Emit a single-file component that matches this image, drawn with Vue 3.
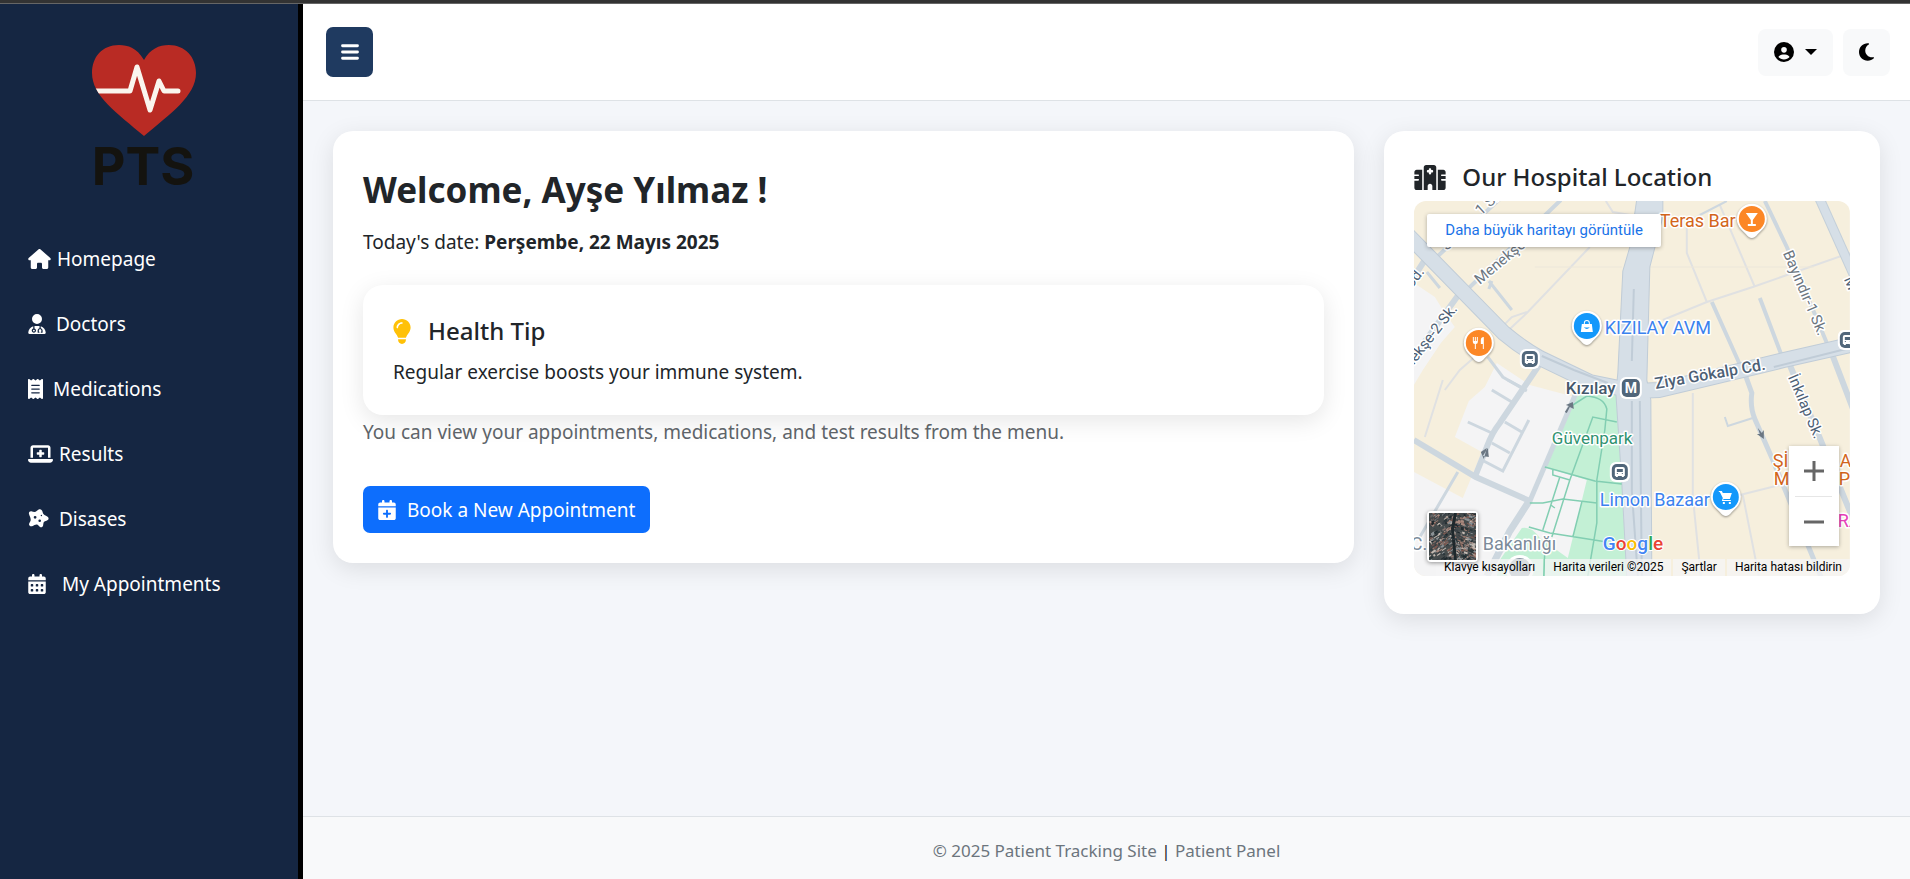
<script setup>
const calendarTop = 'M96 32V64H48C21.5 64 0 85.5 0 112v48H448V112c0-26.5-21.5-48-48-48H352V32c0-17.7-14.3-32-32-32s-32 14.3-32 32V64H160V32c0-17.7-14.3-32-32-32S96 14.3 96 32z'
const dayCells = [272, 400]
  .flatMap((y) => [64, 192, 320].map((x) => `M${x} ${y}v32c0 8.800 7.200 16 16 16h32c8.800 0 16-7.200 16-16v-32c0-8.800-7.200-16-16-16h-32c-8.800 0-16 7.200-16 16z`))
  .join('')

const navItems = [
  {
    label: 'Homepage',
    gap: 'gap-narrow',
    width: 23,
    box: '0 0 576 512',
    d: 'M575.8 255.5c0 18-15 32.1-32 32.1h-32l.7 160.2c0 2.7-.2 5.4-.5 8.1V472c0 22.1-17.9 40-40 40H456c-1.1 0-2.2 0-3.3-.1c-1.4 .1-2.8 .1-4.2 .1H416 392c-22.1 0-40-17.9-40-40V448 384c0-17.7-14.3-32-32-32H256c-17.7 0-32 14.3-32 32v64 24c0 22.1-17.9 40-40 40H160 128.1c-1.5 0-3-.1-4.5-.2c-1.2 .1-2.4 .2-3.6 .2H104c-22.1 0-40-17.9-40-40V360c0-.9 0-1.9 .1-2.8V287.6H32c-18 0-32-14-32-32.1c0-9 3-17 10-24L266.4 8c7-7 15-8 22-8s15 2 21 7L564.8 231.5c8 7 12 15 11 24z'
  },
  {
    label: 'Doctors',
    gap: 'gap-medium',
    width: 18,
    box: '0 0 448 512',
    d: 'M224 256a128 128 0 1 0 0-256 128 128 0 1 0 0 256zm-96 55.2C54 332.9 0 401.3 0 482.3C0 498.7 13.3 512 29.7 512H418.3c16.4 0 29.7-13.3 29.7-29.7c0-81-54-149.4-128-171.1V362c27.6 7.1 48 32.2 48 62v40c0 8.8-7.2 16-16 16H336c-8.8 0-16-7.2-16-16s7.2-16 16-16V424c0-17.7-14.3-32-32-32s-32 14.3-32 32v24c8.8 0 16 7.2 16 16s-7.2 16-16 16H256c-8.8 0-16-7.2-16-16V424c0-29.8 20.4-54.9 48-62V304.9c-6-.6-12.1-.9-18.3-.9H178.3c-6.2 0-12.3 .3-18.3 .9v65.4c23.1 6.9 40 28.3 40 53.7c0 30.9-25.1 56-56 56s-56-25.1-56-56c0-25.4 16.9-46.8 40-53.7V311.2zM144 448a24 24 0 1 0 0-48 24 24 0 1 0 0 48z'
  },
  {
    label: 'Medications',
    gap: 'gap-medium',
    width: 15,
    box: '0 0 384 512',
    d: 'M14 2.2C22.5-1.7 32.5-.3 39.6 5.8L80 40.4 120.4 5.8c9-7.7 22.3-7.7 31.2 0L192 40.4 232.4 5.8c9-7.7 22.3-7.7 31.2 0L304 40.4 344.4 5.8c7.1-6.1 17.1-7.5 25.6-3.6s14 12.4 14 21.8V488c0 9.4-5.5 17.9-14 21.8s-18.5 2.5-25.6-3.6L304 471.6l-40.4 34.6c-9 7.7-22.3 7.7-31.2 0L192 471.6l-40.4 34.6c-9 7.7-22.3 7.7-31.2 0L80 471.6 39.6 506.2c-7.1 6.1-17.1 7.5-25.6 3.6S0 497.4 0 488V24C0 14.6 5.5 6.1 14 2.2zM96 144c-8.8 0-16 7.2-16 16s7.2 16 16 16H288c8.8 0 16-7.2 16-16s-7.2-16-16-16H96zM80 352c0 8.8 7.2 16 16 16H288c8.8 0 16-7.2 16-16s-7.2-16-16-16H96c-8.800 0-16 7.200-16 16zM96 240c-8.8 0-16 7.2-16 16s7.2 16 16 16H288c8.8 0 16-7.2 16-16s-7.2-16-16-16H96z'
  },
  {
    label: 'Results',
    gap: 'gap-narrow',
    width: 25,
    box: '0 0 640 512',
    d: 'M64 96c0-35.3 28.7-64 64-64H512c35.3 0 64 28.7 64 64V352H512V96H128V352H64V96zM0 403.2C0 392.6 8.6 384 19.2 384H620.8c10.6 0 19.2 8.6 19.2 19.2c0 42.4-34.4 76.8-76.8 76.8H76.8C34.4 480 0 445.6 0 403.2zM288 160c0-8.8 7.2-16 16-16h32c8.8 0 16 7.2 16 16v48h48c8.8 0 16 7.2 16 16v32c0 8.8-7.2 16-16 16H352v48c0 8.8-7.2 16-16 16H304c-8.8 0-16-7.2-16-16V272H240c-8.8 0-16-7.2-16-16V224c0-8.8 7.2-16 16-16h48V160z'
  },
  {
    label: 'Disases',
    gap: 'gap-medium',
    width: 21,
    box: '0 0 21 20',
    d: 'M1 5C.4 3 2.300 1.700 4 2.500C5.800 3.300 7.500 3.200 9 1.800C10.500 0 12.600-.4 14 1.500C15 3 14.500 5 16.500 6C18.500 7 20.500 7.500 20.600 9.500C20.500 11.500 18 11.600 16.500 12.500C15 13.500 15.600 15 15 17C14 19 12 18.600 11 17C10 15.500 8.500 15 6.500 16C4.500 17.300 2 18 1.200 16C.5 14 2.500 13 2.700 11.200C2.800 8.800 1.500 7 1 5zM5.700 8.300a1.400 1.400 0 1 0 2.800 0a1.400 1.400 0 1 0-2.800 0zM10.400 11.800a1.300 1.300 0 1 0 2.600 0a1.300 1.300 0 1 0-2.600 0zM12.700 6.500a.7.700 0 1 0 1.400 0a.7.700 0 1 0-1.400 0z'
  },
  {
    label: 'My Appointments',
    gap: 'gap-wide',
    width: 18,
    box: '0 0 448 512',
    d: `${calendarTop}M0 192H448V464c0 26.500-21.500 48-48 48H48c-26.500 0-48-21.500-48-48V192z${dayCells}`
  }
]

// Rooftops of the satellite preview, from a small seeded generator.
let seed = 7
const rand = () => {
  seed = (seed * 16807) % 2147483647
  return seed / 2147483647
}
const roofColors = ['#96766c', '#a98b80', '#66686a', '#8b9296', '#3a4146', '#7a5850', '#c4bab2', '#1f292e', '#2b373a']
const roofs = Array.from({ length: 480 }, () => {
  const x = Math.round(rand() * 48)
  const y = Math.round(rand() * 48)
  return {
    x,
    y,
    w: 1 + Math.round(rand() * 4),
    h: 1 + Math.round(rand()),
    turn: `rotate(${x < 25 ? -35 : 20} ${x} ${y})`,
    fill: roofColors[Math.floor(rand() * roofColors.length)]
  }
})

const roads = [
  { w: 6, d: 'M0 239L62 276L116 300' },
  { w: 5, d: 'M116 300L163 190' },
  { w: 7, d: 'M116 299L96 330L73 375' },
  { w: 6, d: 'M61 276L73 246Q78 232 86 222L128 160' },
  { w: 3, d: 'M78 189L98 201M54 221L78 232M91 221L108 231M115 219L89 270L68 259M78 242L96 252M94 179L109 187' },
  { w: 3, d: 'M44 271L6 336M74 156L89 176L113 190' },
  { w: 6, d: 'M46 92L0 156M11 59L0 76' },
  { w: 4, d: 'M54 88L147-1M23 56L86-2' },
  { w: 3, d: 'M13 71L26 87M75 80L98 109M75 88L78 80' },
  { w: 4, d: 'M351 0L373 46L413 142M298 101L328 168M346 97L368 155' },
  { w: 6, d: 'M417 150L440 210M376 164L440 320' },
  { w: 5, d: 'M330 170L338 192Q336 206 341 218L359 259L408 378' },
  { w: 2, d: 'M311 216L314 225L339 217M286 14L313 0' }
]

const lanes = 'M29 179L11 236M176 46L113 112L96 128M113 111L98 116L83 131M62 155L46 169L31 189M306 4L341 86M273 26V52L293 101M249 119L293 101L339 86L436 52M286 14L273 22M279 192V296L287 375M329 294L345 375M326 294L366 284M192 0L199 11L228 16M0 66'

const parkPaths = 'M159 204L173 195Q190 196 193 208L191 229L183 279M156 279L179 216L203 221M131 266L181 280L208 283M139 269V274L156 279L138 336M146 276L129 329M116 302H129L149 298L183 302M183 279V322L174 375M168 301L159 336M115 326L136 332L193 341M131 349L130 375M137 304L141 307'

const pins = [
  { x: 338, y: 18, color: '#fc8726', d: 'M-6-6H6L1 1V5H4V7H-4V5H-1V1Z' },
  { x: 65, y: 142, color: '#fc8726', d: 'M-6-6h1v4h1v-4h1v4h1v-4h1v5q0 2-2 2v5h-1v-5q-2 0-2-2zM2-3q0-3 3-3v12h-1v-5h-2z' },
  { x: 173, y: 125, color: '#1398fb', d: 'M-5-2h2v-1a3 3 0 0 1 6 0v1h2l1 8h-12zM-2-2h4v-1a2 2 0 0 0-4 0zM-3 1q3 4 6 0q-3 1-6 0' },
  { x: 312, y: 296, color: '#1398fb', d: 'M-7-6h3l1 2h9l-2 6h-6l-1 1h8v1h-9l1-3-3-6h-1zM-3 5h2v2h-2zM3 5h2v2h-2z' }
]
const stops = [
  { x: 116, y: 158 },
  { x: 206, y: 271 },
  { x: 434, y: 139 }
]
</script>

<template>
  <div class="page">
    <div class="window-edge"></div>
    <div class="shell">
      <aside class="sidebar">
        <svg class="logo" viewBox="0 0 110 150" role="img" aria-label="PTS">
          <defs>
            <clipPath id="heart-clip">
              <path d="M54 16C47 4 38 1 29 1C12 1 2 13 2 29C2 52 27 69 54 92C80 70 106 52 106 29C106 13 95 1 79 1C69 1 60 5 54 16Z" />
            </clipPath>
          </defs>
          <path fill="#b92b24" d="M54 16C47 4 38 1 29 1C12 1 2 13 2 29C2 52 27 69 54 92C80 70 106 52 106 29C106 13 95 1 79 1C69 1 60 5 54 16Z" />
          <path clip-path="url(#heart-clip)" class="pulse" d="M0 47H40L47 23L60 66L69 37L74 47H88" />
          <text x="53" y="141" text-anchor="middle" class="logo-text">PTS</text>
        </svg>
        <nav class="nav" aria-label="Main">
          <a v-for="item in navItems" :key="item.label" href="#" :class="['nav-link', item.gap]">
            <svg :width="item.width" height="20" :viewBox="item.box" fill="currentColor" fill-rule="evenodd" aria-hidden="true"><path :d="item.d" /></svg>
            <span>{{ item.label }}</span>
          </a>
        </nav>
      </aside>

      <div class="column">
        <header class="topbar">
          <button class="menu-button" type="button" aria-label="Toggle menu">
            <svg width="18" height="20" viewBox="0 0 448 512" fill="none" stroke="currentColor" stroke-width="72" stroke-linecap="round" aria-hidden="true"><path d="M32 96H416M32 256H416M32 416H416" /></svg>
          </button>
          <div class="tools">
            <button class="tool account" type="button" aria-label="Account">
              <svg width="20" height="20" viewBox="0 0 512 512" aria-hidden="true"><path d="M399 384.200C376.900 345.800 335.400 320 288 320H224c-47.400 0-88.900 25.800-111 64.200c35.200 39.200 86.200 63.800 143 63.800s107.800-24.700 143-63.800zM0 256a256 256 0 1 1 512 0A256 256 0 1 1 0 256zm256 16a72 72 0 1 0 0-144 72 72 0 1 0 0 144z" /></svg>
              <svg width="12" height="6" viewBox="0 0 12 6" aria-hidden="true"><path d="M0 0H12L6 6Z" /></svg>
            </button>
            <button class="tool" type="button" aria-label="Dark mode">
              <svg width="15" height="20" viewBox="0 0 384 512" aria-hidden="true"><path d="M223.500 32C100 32 0 132.300 0 256S100 480 223.500 480c60.600 0 115.500-24.200 155.800-63.400c5-4.900 6.300-12.500 3.100-18.700s-10.100-9.700-17-8.500c-9.800 1.700-19.800 2.600-30.100 2.600c-96.900 0-175.500-78.800-175.500-176c0-65.800 36-123.100 89.300-153.300c6.100-3.500 9.200-10.500 7.700-17.300s-7.300-11.900-14.300-12.500c-6.300-.5-12.600-.8-19-.8z" /></svg>
            </button>
          </div>
        </header>

        <main class="content">
          <section class="card welcome">
            <h1>Welcome, Ayşe Yılmaz !</h1>
            <p class="date">Today's date: <strong>Perşembe, 22 Mayıs 2025</strong></p>
            <div class="card tip">
              <h2>
                <svg width="18" height="25" viewBox="12 0 360 512" fill="#ffc107" aria-hidden="true"><path d="M272 384c9.600-31.900 29.500-59.100 49.200-86.200l0 0c5.200-7.100 10.400-14.200 15.400-21.400c19.800-28.500 31.400-63 31.400-100.300C368 78.800 289.200 0 192 0S16 78.800 16 176c0 37.300 11.600 71.900 31.400 100.300c5 7.200 10.200 14.300 15.400 21.400l0 0c19.800 27.100 39.700 54.400 49.200 86.200H272zM192 512c44.200 0 80-35.800 80-80V416H112v16c0 44.200 35.800 80 80 80zM112 176c0 8.800-7.200 16-16 16s-16-7.200-16-16c0-61.900 50.100-112 112-112c8.800 0 16 7.200 16 16s-7.200 16-16 16c-44.200 0-80 35.800-80 80z" /></svg>
                Health Tip
              </h2>
              <p>Regular exercise boosts your immune system.</p>
            </div>
            <p class="hint">You can view your appointments, medications, and test results from the menu.</p>
            <button class="book" type="button">
              <svg width="18" height="20" viewBox="0 0 448 512" fill="currentColor" aria-hidden="true"><path :d="calendarTop + 'M448 192H0V464c0 26.500 21.500 48 48 48H400c26.500 0 48-21.500 48-48V192zM224 248c13.300 0 24 10.700 24 24v56h56c13.300 0 24 10.700 24 24s-10.700 24-24 24H248v56c0 13.300-10.700 24-24 24s-24-10.700-24-24V376H144c-13.300 0-24-10.700-24-24s10.700-24 24-24h56V272c0-13.300 10.700-24 24-24z'" /></svg>
              Book a New Appointment
            </button>
          </section>

          <section class="card location">
            <h2>
              <svg width="32" height="25" viewBox="0 0 640 512" fill="currentColor" aria-hidden="true"><path fill-rule="evenodd" d="M192 48c0-26.500 21.500-48 48-48H400c26.500 0 48 21.500 48 48V512H368V432c0-26.500-21.500-48-48-48s-48 21.500-48 48v80H192V48zM48 96H160V512H48c-26.500 0-48-21.500-48-48V320H80c8.800 0 16-7.200 16-16s-7.200-16-16-16H0V224H80c8.800 0 16-7.200 16-16s-7.200-16-16-16H0V144c0-26.500 21.500-48 48-48zm544 0c26.500 0 48 21.500 48 48v48H560c-8.800 0-16 7.200-16 16s7.200 16 16 16h80v64H560c-8.800 0-16 7.200-16 16s7.200 16 16 16h80V464c0 26.500-21.500 48-48 48H480V96H592zM312 64c-8.800 0-16 7.200-16 16v24H272c-8.800 0-16 7.200-16 16v16c0 8.800 7.200 16 16 16h24v24c0 8.800 7.200 16 16 16h16c8.800 0 16-7.200 16-16V152h24c8.800 0 16-7.200 16-16V120c0-8.800-7.200-16-16-16H344V80c0-8.800-7.200-16-16-16H312z" /></svg>
              Our Hospital Location
            </h2>
            <div class="map">
              <svg class="map-canvas" viewBox="0 0 436 375" preserveAspectRatio="xMidYMid slice">
                <rect width="436" height="375" fill="#f6efdd" />
                <path fill="#f4f4f5" d="M83 162L116 184L161 196L213 375H0V271L49 297L68 251L41 236L55 200L71 186ZM0 82L21 96L31 112L41 126L27 142L9 169L0 184Z" />
                <path fill="#c3f0d5" d="M161 197L172 190L203 193L208 282L213 375H83L86 359L108 327Q118 325 126 337L154 357L173 279L131 266L150 225Z" />
                <path :d="lanes" fill="none" stroke="#e0e1e2" stroke-width="2" />
                <path v-for="road in roads" :key="road.d" :d="road.d" :stroke-width="road.w" fill="none" stroke="#cdd7df" />
                <path fill="none" stroke="#ece7da" d="M121 66H208M236 66H400" />
                <path fill="none" stroke="#c3cfd9" stroke-width="10" d="M405-4L440 74" />
                <path fill="none" stroke="#d6dfe7" stroke-width="8" d="M405-4L440 74" />
                <path class="casing" d="M-8 32L90 132Q108 147 126 157L176 181L220 190L245 189L300 176L370 159L445 142" />
                <path fill="#d6dfe7" stroke="#c0ccd7" d="M223-2L216 46L209 70L204 172L202 192L208 282L213 377H238L237 199L233 179L236 66L249 16V-2Z" />
                <path class="avenue" d="M-8 32L90 132Q108 147 126 157L176 181L220 190L245 189L300 176L370 159L445 142" />
                <path fill="none" stroke="#c0ccd7" stroke-width="2" d="M220 88L218 160M218 200V290L224 375M226 200L228 375M128 155L160 169L194 182M360 166L436 147" />
                <path :d="parkPaths" fill="none" stroke="#82ceb2" stroke-width="1.500" />
                <g fill="#6b7783">
                  <path d="M73 247L70 258L67 251ZM69 255L75 256L74 247Z" />
                  <path d="M159 201L160 208L156 206L153 212L151 211L155 205L152 204Z" />
                  <path d="M344 227L348 232L350 229L350 238L343 233L346 233Z" />
                </g>
                <circle cx="106" cy="368" r="14" fill="#fff" />
                <circle cx="106" cy="368" r="11" fill="#8592a0" />

                <g class="street">
                  <text transform="translate(67 15) rotate(-42)">1 Sk.</text>
                  <text transform="translate(33 50) rotate(-42)">Sk.</text>
                  <text transform="translate(66 84) rotate(-40)">Menekşe</text>
                  <text class="dark" text-anchor="end" transform="translate(11 71) rotate(-52)">Cd.</text>
                  <text class="dark" text-anchor="end" transform="translate(44 108) rotate(-52)">Menekşe-2 Sk.</text>
                  <text transform="translate(369 52) rotate(67)">Bayındır-1 Sk.</text>
                  <text class="dark" transform="translate(374 176) rotate(67)">İnkılap Sk.</text>
                  <text class="dark" transform="translate(430 78) rotate(67)">M</text>
                  <text class="dark bold" transform="translate(242 188) rotate(-10)">Ziya Gökalp Cd.</text>
                </g>
                <g class="place">
                  <text class="orange" x="246" y="26">Teras Bar</text>
                  <text class="blue" x="191" y="133">KIZILAY AVM</text>
                  <text class="blue" x="186" y="305">Limon Bazaar</text>
                  <text class="green" x="138" y="243">Güvenpark</text>
                  <text class="slate" x="152" y="193">Kızılay</text>
                  <text class="grey" x="-3" y="349">C.</text>
                  <text class="grey" x="69" y="349">Bakanlığı</text>
                  <text class="orange" x="359" y="266">Şİ</text>
                  <text class="orange" x="360" y="284">M</text>
                  <text class="orange" x="426" y="266">A</text>
                  <text class="orange" x="425" y="284">P</text>
                  <text class="pink" x="424" y="326">RA</text>
                </g>
                <g v-for="stop in stops" :key="stop.x" :transform="`translate(${stop.x} ${stop.y})`">
                  <rect x="-10" y="-10" width="20" height="20" rx="6" fill="#fff" />
                  <rect x="-8" y="-8" width="16" height="16" rx="5" fill="#50667a" />
                  <path fill="#fff" fill-rule="evenodd" d="M-5-3q0-2 2-2h6q2 0 2 2v7h-1v1h-2v-1h-4v1h-2v-1h-1zM-3-3v3h6v-3zM-3 1v1h1v-1zM2 1v1h1v-1z" />
                </g>
                <g transform="translate(217 187)">
                  <rect x="-11" y="-11" width="22" height="22" rx="6" fill="#fff" />
                  <rect x="-9" y="-9" width="18" height="18" rx="5" fill="#50667a" />
                  <text class="metro" y="5" text-anchor="middle">M</text>
                </g>
                <g v-for="pin in pins" :key="pin.x" :transform="`translate(${pin.x} ${pin.y})`">
                  <path class="pin" d="M0 19Q-3 19 -6 15L-11 10A15 15 0 1 1 11 10L6 15Q3 19 0 19Z" />
                  <circle r="13" :fill="pin.color" />
                  <path fill="#fff" fill-rule="evenodd" :d="pin.d" />
                </g>
                <text class="google" x="189" y="349"><tspan fill="#4285f4">G</tspan><tspan fill="#ea4335">o</tspan><tspan fill="#fbbc04">o</tspan><tspan fill="#4285f4">g</tspan><tspan fill="#34a853">l</tspan><tspan fill="#ea4335">e</tspan></text>
              </svg>
              <a class="map-larger" href="#">Daha büyük haritayı görüntüle</a>
              <div class="zoom">
                <button type="button" aria-label="Zoom in"><svg width="20" height="20" viewBox="0 0 20 20" aria-hidden="true"><path d="M0 10H20M10 0V20" /></svg></button>
                <button type="button" aria-label="Zoom out"><svg width="20" height="20" viewBox="0 0 20 20" aria-hidden="true"><path d="M0 10H20" /></svg></button>
              </div>
              <div class="credits">
                <button type="button">Klavye kısayolları</button>
                <span>Harita verileri ©2025</span>
                <a href="#">Şartlar</a>
                <a href="#">Harita hatası bildirin</a>
              </div>
              <button class="satellite" type="button" aria-label="Satellite view">
                <svg viewBox="0 0 48 48" aria-hidden="true">
                  <rect width="48" height="48" fill="#454b4c" />
                  <rect v-for="(roof, i) in roofs" :key="i" :x="roof.x" :y="roof.y" :width="roof.w" :height="roof.h" :transform="roof.turn" :fill="roof.fill" />
                  <path fill="none" stroke="#1e282c" stroke-width="3" d="M27 0L24 16L27 48" />
                  <path fill="none" stroke="#39454a" d="M0 12L14 22L25 27L48 18M0 40L14 22" />
                </svg>
              </button>
            </div>
          </section>
        </main>

        <footer class="footer">© 2025 Patient Tracking Site <span>|</span> Patient Panel</footer>
      </div>
    </div>
  </div>
</template>

<style>
body {
  margin: 0;
  background: #f4f6fa;
}
</style>

<style scoped>
.page {
  min-height: 100vh;
  display: flex;
  flex-direction: column;
  font-family: "Noto Sans", "Open Sans", sans-serif;
  font-size: 19px;
  line-height: 30px;
  color: #212529;
}
.page * {
  box-sizing: border-box;
}
button {
  font: inherit;
  color: inherit;
  border: 0;
  padding: 0;
  margin: 0;
  cursor: pointer;
}
a {
  color: inherit;
  text-decoration: none;
}
h1,
h2,
p {
  margin: 0;
}
svg {
  display: block;
  flex-shrink: 0;
}
.window-edge {
  height: 4px;
  background: #333;
  border-bottom: 1px solid #666;
  box-sizing: border-box;
}
.shell {
  flex: 1;
  display: flex;
}
.sidebar {
  width: 303px;
  flex-shrink: 0;
  background: #152642;
  border-right: 5px solid #000;
  padding: 40px 10px 20px;
  color: #fff;
}
.logo {
  width: 110px;
  height: 150px;
  margin: 0 auto 40px 80px;
  overflow: visible;
}
.logo-text {
  font: 700 52px Inter, "Liberation Sans", sans-serif;
  fill: #14130f;
}
.pulse {
  fill: none;
  stroke: #faf5ee;
  stroke-width: 5;
  stroke-linecap: round;
  stroke-linejoin: round;
}
.nav {
  display: flex;
  flex-direction: column;
  gap: 15px;
}
.nav-link {
  display: flex;
  align-items: center;
  height: 50px;
  padding: 0 18px;
}
.gap-narrow {
  gap: 6px;
}
.gap-medium {
  gap: 10px;
}
.gap-wide {
  gap: 16px;
}
.column {
  flex: 1;
  min-width: 0;
  display: flex;
  flex-direction: column;
  background: #f4f6fa;
}
.topbar {
  display: flex;
  align-items: center;
  justify-content: space-between;
  height: 97px;
  padding: 0 20px 0 23px;
  background: #fff;
  border-bottom: 1px solid #dee2e6;
}
.menu-button {
  width: 47px;
  height: 50px;
  display: grid;
  place-items: center;
  border-radius: 7px;
  background: #1f3a60;
  color: #fff;
}
.tools {
  display: flex;
  gap: 10px;
}
.tool {
  height: 47px;
  padding: 0 16px;
  display: flex;
  align-items: center;
  gap: 11px;
  border-radius: 8px;
  background: #f8f9fa;
  color: #000;
}
.content {
  flex: 1;
  display: grid;
  grid-template-columns: repeat(12, minmax(0, 1fr));
  gap: 30px;
  align-items: start;
  padding: 30px;
}
.card {
  padding: 30px;
  border-radius: 20px;
  background: #fff;
  box-shadow: 0 6px 24px rgba(0, 0, 0, 0.1);
}
.welcome {
  grid-column: span 8;
}
.location {
  grid-column: span 4;
  padding-bottom: 38px;
}
h1 {
  font-size: 35px;
  font-weight: 700;
  line-height: 58px;
  margin-bottom: 8px;
}
h2 {
  display: flex;
  align-items: center;
  gap: 16px;
  font-size: 24px;
  font-weight: 500;
  line-height: 32px;
}
.tip {
  margin: 28px 0 2px;
  padding-bottom: 28px;
}
.tip h2 {
  gap: 17px;
  margin-bottom: 10px;
}
.hint {
  color: #5e6469;
}
.book {
  display: flex;
  align-items: center;
  gap: 11px;
  height: 47px;
  margin-top: 39px;
  padding: 0 15px;
  border-radius: 7px;
  background: #0d6efd;
  color: #fff;
}
.map {
  position: relative;
  height: 375px;
  margin-top: 8px;
  border-radius: 12px;
  overflow: hidden;
  font-family: Roboto, sans-serif;
}
.map-canvas {
  width: 100%;
  height: 100%;
}
.map-canvas text {
  font-family: Roboto, sans-serif;
}
.casing {
  fill: none;
  stroke: #c0ccd7;
  stroke-width: 16;
}
.avenue {
  fill: none;
  stroke: #d6dfe7;
  stroke-width: 14;
}
.street text,
.place text {
  font-size: 18px;
  paint-order: stroke;
  stroke: #fff;
  stroke-width: 3px;
  stroke-linejoin: round;
}
.street text {
  font-size: 15px;
  fill: #6c7680;
}
.street .dark {
  fill: #4d6075;
}
.street .bold {
  font-size: 16px;
  font-weight: 500;
}
.place .orange {
  fill: #d3651a;
}
.place .blue {
  fill: #3b82ee;
}
.place .green {
  font-size: 17px;
  fill: #2f9270;
}
.place .slate {
  font-size: 17px;
  fill: #45586b;
  font-weight: 500;
}
.place .grey {
  fill: #7c8b9a;
}
.place .pink {
  fill: #e640b8;
}
.metro {
  font-size: 14px;
  font-weight: 700;
  fill: #fff;
}
.pin {
  fill: #fff;
  filter: drop-shadow(0 1px 1px rgba(0, 0, 0, 0.4));
}
.google {
  font-size: 19px;
  font-weight: 500;
  paint-order: stroke;
  stroke: #fff;
  stroke-width: 2px;
}
.map-larger {
  position: absolute;
  top: 13px;
  left: 13px;
  padding: 0 18px;
  border-radius: 2px;
  background: #fff;
  box-shadow: 0 1px 4px rgba(0, 0, 0, 0.3);
  color: #1a73e8;
  font-size: 15px;
  line-height: 33px;
}
.zoom {
  position: absolute;
  right: 11px;
  bottom: 30px;
  width: 50px;
  background: #fff;
  box-shadow: 0 1px 4px rgba(0, 0, 0, 0.3);
}
.zoom button {
  width: 100%;
  height: 50px;
  display: grid;
  place-items: center;
  background: none;
}
.zoom button + button::before {
  content: "";
  width: 37px;
  height: 1px;
  background: #e6e6e6;
}
.zoom button + button {
  grid-template-rows: 1px 1fr;
}
.zoom svg {
  fill: none;
  stroke: #666;
  stroke-width: 3;
}
.credits {
  position: absolute;
  right: 0;
  bottom: 0;
  display: flex;
  gap: 2px;
  font-size: 12px;
  line-height: 17px;
  color: #000;
}
.credits > * {
  padding: 0 8px;
  background: rgba(245, 245, 245, 0.75);
  white-space: nowrap;
}
.satellite {
  position: absolute;
  left: 13px;
  bottom: 14px;
  width: 51px;
  height: 51px;
  padding: 2px;
  border-radius: 4px;
  background: #fff;
  box-shadow: 0 1px 4px rgba(0, 0, 0, 0.4);
}
.satellite svg {
  width: 100%;
  height: 100%;
}
.footer {
  height: 63px;
  border-top: 1px solid #dee2e6;
  background: #f8f9fa;
  color: #6c757d;
  font-size: 17px;
  line-height: 67px;
  text-align: center;
}
.footer span {
  color: #212529;
}
</style>
